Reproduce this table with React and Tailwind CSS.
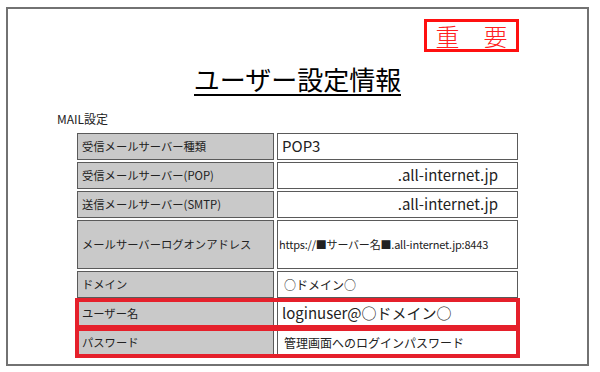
import React from "react";

const jp = { fontFamily: '"Noto Sans CJK JP", "Noto Sans", sans-serif' };

const rows = [
  { label: "受信メールサーバー種類", value: "POP3", kind: "big" },
  { label: "受信メールサーバー(POP)", value: ".all-internet.jp", kind: "right" },
  { label: "送信メールサーバー(SMTP)", value: ".all-internet.jp", kind: "right" },
  {
    label: "メールサーバーログオンアドレス",
    value: "https://■サーバー名■.all-internet.jp:8443",
    kind: "small",
    tall: true,
  },
  { label: "ドメイン", value: "○ドメイン○", kind: "plain" },
  { label: "ユーザー名", value: "loginuser@○ドメイン○", kind: "big", mark: true },
  { label: "パスワード", value: "管理画面へのログインパスワード", kind: "plain", mark: true },
];

function Row({ row }) {
  const h = row.tall ? "h-[49px]" : "h-[27px]";
  let valueClass = "text-[12px] pl-[6px] justify-start";
  if (row.kind === "big") valueClass = "text-[15px] pl-[4px] justify-start";
  if (row.kind === "right") valueClass = "text-[15px] pr-[19px] justify-end";
  if (row.kind === "small") valueClass = "text-[11px] pl-[1px] justify-start tracking-[-0.2px]";

  return (
    <div className={`relative w-[441px] flex gap-[3px] ${h}`}>
      <div className="w-[197px] flex items-center bg-[#c9c9c9] border border-[#5a5a5a] px-[4px] text-[11.3px] text-[#222]">
        {row.label}
      </div>
      <div className={`w-[241px] flex items-center bg-white border border-[#5a5a5a] text-[#222] ${valueClass}`}>
        {row.value}
      </div>
      {row.mark && (
        <div className="absolute -top-[2px] -bottom-[2px] -left-[2px] -right-[2px] border-[4px] border-[#e5202b]" />
      )}
    </div>
  );
}

export default function App() {
  return (
    <div className="w-[600px] h-[372px] bg-white pt-[7px] pl-[6px]" style={jp}>
      <div className="w-[583px] h-[359px] border-2 border-[#727272] relative">
        <div className="flex justify-end pr-[68px] pt-[10px]">
          <div className="w-[95px] h-[33px] border-[3px] border-[#ff1010] flex items-center justify-center text-[24px] font-extralight text-[#ff2020] leading-none">
            重　要
          </div>
        </div>

        <div className="flex justify-center mt-[12px]">
          <h1 className="text-[26px] leading-[30px] text-black border-b-2 border-black">
            ユーザー設定情報
          </h1>
        </div>

        <div className="ml-[49px] mt-[16px] text-[12px] leading-[14px] text-[#222]">MAIL設定</div>

        <div className="ml-[69px] mt-[7px] flex flex-col gap-[2px]">
          {rows.map((r, i) => (
            <Row key={i} row={r} />
          ))}
        </div>
      </div>
    </div>
  );
}
